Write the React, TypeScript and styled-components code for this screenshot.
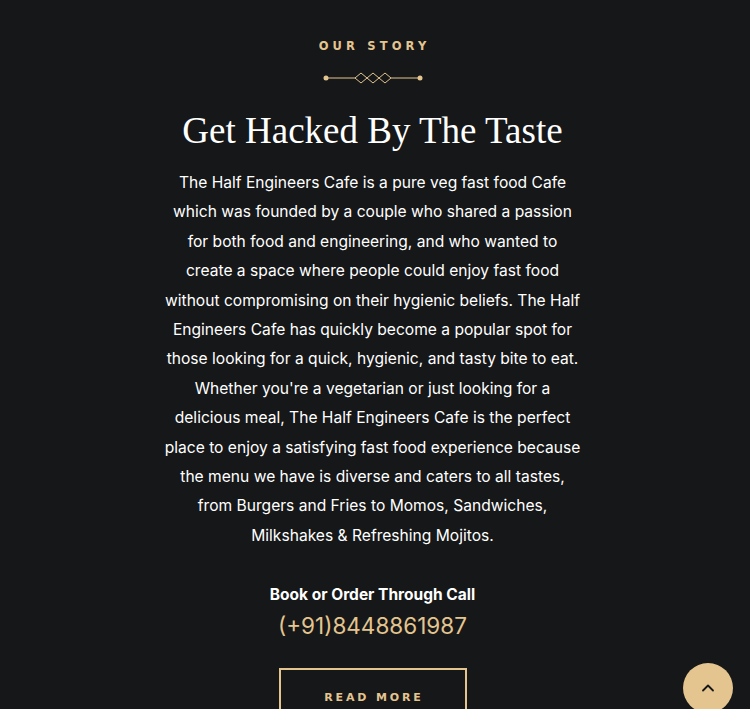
import React from "react";
import styled, { createGlobalStyle } from "styled-components";

const Global = createGlobalStyle`
  html, body { margin: 0; padding: 0; background: #161718; }
  body { font-family: "Inter", "DejaVu Sans", sans-serif; overflow: hidden; }
  * { box-sizing: border-box; }
`;

const Page = styled.main`
  position: relative;
  width: 750px;
  height: 709px;
  overflow: hidden;
  background: #161718;
`;

const Section = styled.section`
  display: flex;
  flex-direction: column;
  align-items: center;
  text-align: center;
  padding-top: 38px;
  padding-right: 5px;
`;

const Subtitle = styled.p`
  margin: 0;
  color: #e4c590;
  font-family: "DejaVu Sans", sans-serif;
  font-weight: 700;
  font-size: 11.5px;
  letter-spacing: 0.36em;
  text-transform: uppercase;
  line-height: 16px;
  padding-left: 0.36em;
`;

const Separator = styled.svg`
  display: block;
  margin-top: 18px;
`;

const Title = styled.h2`
  margin: 24px 0 0;
  color: #ffffff;
  font-family: "Liberation Serif", serif;
  font-weight: 400;
  font-size: 37px;
  line-height: 46px;
`;

const Text = styled.p`
  margin: 14px 0 0;
  width: 450px;
  color: #ffffff;
  font-family: "Inter", sans-serif;
  font-size: 15.6px;
  line-height: 29.4px;
`;

const CallLabel = styled.p`
  margin: 34px 0 0;
  color: #ffffff;
  font-family: "Inter", sans-serif;
  font-weight: 700;
  font-size: 15.5px;
  line-height: 22px;
`;

const Phone = styled.a`
  margin-top: 5px;
  color: #e4c590;
  font-family: "Inter", sans-serif;
  font-size: 22.5px;
  line-height: 30px;
  text-decoration: none;
`;

const Button = styled.a`
  margin-top: 27px;
  width: 188px;
  height: 58px;
  border: 2px solid #e4c590;
  display: flex;
  align-items: center;
  justify-content: center;
  color: #e4c590;
  font-family: "DejaVu Sans", sans-serif;
  font-weight: 700;
  font-size: 11px;
  letter-spacing: 0.26em;
  padding-left: 0.26em;
  text-transform: uppercase;
  text-decoration: none;
`;

const BackTop = styled.a`
  position: absolute;
  left: 683px;
  top: 663px;
  width: 50px;
  height: 50px;
  border-radius: 50%;
  background: #e4c590;
  display: flex;
  align-items: center;
  justify-content: center;
`;

const lines = [
  "The Half Engineers Cafe is a pure veg fast food Cafe",
  "which was founded by a couple who shared a passion",
  "for both food and engineering, and who wanted to",
  "create a space where people could enjoy fast food",
  "without compromising on their hygienic beliefs. The Half",
  "Engineers Cafe has quickly become a popular spot for",
  "those looking for a quick, hygienic, and tasty bite to eat.",
  "Whether you're a vegetarian or just looking for a",
  "delicious meal, The Half Engineers Cafe is the perfect",
  "place to enjoy a satisfying fast food experience because",
  "the menu we have is diverse and caters to all tastes,",
  "from Burgers and Fries to Momos, Sandwiches,",
  "Milkshakes & Refreshing Mojitos.",
];

export default function App() {
  return (
    <Page>
      <Global />
      <Section>
        <Subtitle>Our Story</Subtitle>
        <Separator width="100" height="12" viewBox="0 0 100 12">
          <circle cx="3" cy="6" r="2.5" fill="#e4c590" />
          <circle cx="97" cy="6" r="2.5" fill="#e4c590" />
          <line x1="3" y1="6" x2="32" y2="6" stroke="#e4c590" strokeWidth="1" />
          <line x1="68" y1="6" x2="97" y2="6" stroke="#e4c590" strokeWidth="1" />
          <path d="M32 6 L38 1 L44 6 L38 11 Z" fill="none" stroke="#e4c590" strokeWidth="1" />
          <path d="M44 6 L50 1 L56 6 L50 11 Z" fill="none" stroke="#e4c590" strokeWidth="1" />
          <path d="M56 6 L62 1 L68 6 L62 11 Z" fill="none" stroke="#e4c590" strokeWidth="1" />
        </Separator>
        <Title>Get Hacked By The Taste</Title>
        <Text>
          {lines.map((l, i) => (
            <React.Fragment key={i}>
              {l}
              {i < lines.length - 1 && <br />}
            </React.Fragment>
          ))}
        </Text>
        <CallLabel>Book or Order Through Call</CallLabel>
        <Phone href="#">(+91)8448861987</Phone>
        <Button href="#">Read More</Button>
      </Section>
      <BackTop href="#">
        <svg width="20" height="20" viewBox="0 0 24 24" fill="none" stroke="#161718" strokeWidth="2.2" strokeLinecap="round" strokeLinejoin="round">
          <path d="M6 15 L12 9 L18 15" />
        </svg>
      </BackTop>
    </Page>
  );
}
